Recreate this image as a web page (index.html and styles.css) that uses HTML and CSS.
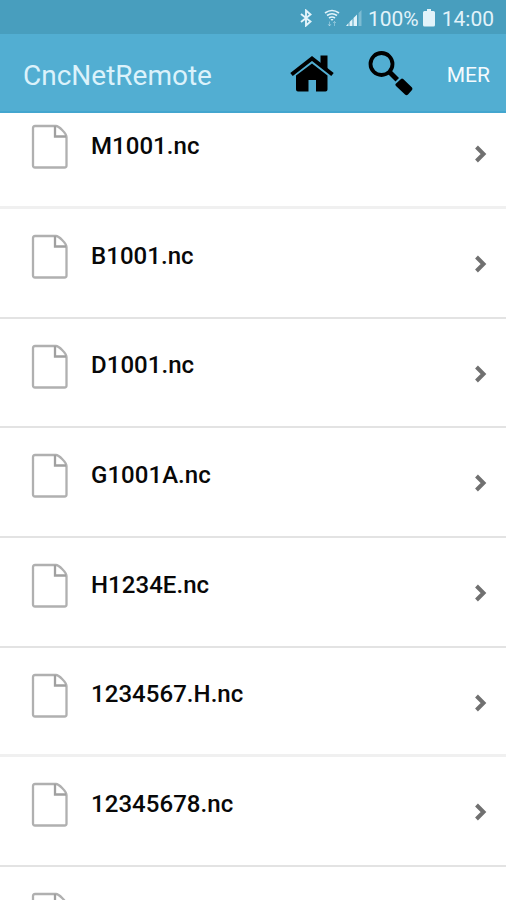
FILE: index.html
```html
<!DOCTYPE html>
<html lang="sv">
<head>
<meta charset="utf-8">
<title>CncNetRemote</title>
<link rel="stylesheet" href="styles.css">
</head>
<body>
<svg class="defs" width="0" height="0" aria-hidden="true">
  <symbol id="file" viewBox="0 0 38 46">
    <path d="M4 2H25C28 2 35.500 9.500 35.500 13V41.500Q35.500 43.500 33.500 43.500H4Q2 43.500 2 41.500V4Q2 2 4 2Z" fill="#fff" stroke="#b0b0b0" stroke-width="2.300"/>
    <path d="M24 2V12.500H35" fill="none" stroke="#a0a0a0" stroke-width="2.300"/>
  </symbol>
  <symbol id="chevron" viewBox="0 0 14 20">
    <path d="M2.500 3L9.500 10L2.500 17" fill="none" stroke="#707070" stroke-width="4"/>
  </symbol>
</svg>
<div class="screen">
  <div class="status">
    <svg class="bluetooth" viewBox="0 0 12 18"><path d="M1 5L10.500 12.500L6 16.500V1.500L10.500 5.500L1 13" fill="none" stroke="currentColor" stroke-width="1.900"/></svg>
    <svg class="wifi" viewBox="0 0 16 18"><path d="M1 4Q8 -1 15 4M3 6.500Q8 3 13 6.500M5 9Q8 7 11 9" fill="none" stroke="currentColor" stroke-width="1.700"/><path d="M6.500 10H9.500L8 12Z" fill="currentColor"/><path d="M5.500 12.500V17M10.500 12.500V17M4 15L5.500 17L7 15M9 14L10.500 12.500L12 14" fill="none" stroke="currentColor" stroke-opacity=".4"/></svg>
    <svg class="signal" viewBox="0 0 18 18"><path d="M1 17L3.500 14V17ZM4.500 17V13L7.500 10V17ZM8.500 17V9L12 5.500V17Z" fill="currentColor"/><path d="M13.500 17V4L16.500 1V17Z" fill="currentColor" opacity=".35"/></svg>
    <span class="percent">100%</span>
    <svg class="battery" viewBox="0 0 12 18"><path d="M4 0H8V2H10.500Q12 2 12 3.500V16Q12 17.500 10.500 17.500H1.500Q0 17.500 0 16V3.500Q0 2 1.500 2H4Z" fill="currentColor"/></svg>
    <span class="clock">14:00</span>
  </div>
  <header class="bar">
    <h1 class="title">CncNetRemote</h1>
    <svg class="home" viewBox="0 0 46 38"><path d="M2.500 20.500L23 4.500L43.500 20.500" fill="none" stroke="#000" stroke-width="4"/><path d="M31.500 1.500H38.500V16L31.500 10.500Z"/><path d="M23 9.500L38.500 21.500V35.500Q38.500 37.500 36.500 37.500H27V26H19.500V37.500H9Q7 37.500 7 35.500V21.500Z"/></svg>
    <svg class="search" viewBox="0 0 46 46"><circle cx="13.500" cy="13" r="11" fill="none" stroke="#000" stroke-width="3.800"/><path d="M19.500 22.500L23 19L31 27L27.500 30.500Z"/><path d="M27.500 33L33 28Q34 27 35.200 28L44 36.500Q45 38 44 39L40 43.500Q38.500 45 37 43.500L28 35Q27 34 27.500 33Z"/></svg>
    <span class="more">MER</span>
  </header>
  <main class="viewport">
    <ul class="list">
      <li class="row soft"><svg class="file"><use href="#file"/></svg><span class="name">M1001.nc</span><svg class="chevron"><use href="#chevron"/></svg></li>
      <li class="row"><svg class="file"><use href="#file"/></svg><span class="name">B1001.nc</span><svg class="chevron"><use href="#chevron"/></svg></li>
      <li class="row"><svg class="file"><use href="#file"/></svg><span class="name">D1001.nc</span><svg class="chevron"><use href="#chevron"/></svg></li>
      <li class="row"><svg class="file"><use href="#file"/></svg><span class="name">G1001A.nc</span><svg class="chevron"><use href="#chevron"/></svg></li>
      <li class="row"><svg class="file"><use href="#file"/></svg><span class="name">H1234E.nc</span><svg class="chevron"><use href="#chevron"/></svg></li>
      <li class="row soft"><svg class="file"><use href="#file"/></svg><span class="name">1234567.H.nc</span><svg class="chevron"><use href="#chevron"/></svg></li>
      <li class="row"><svg class="file"><use href="#file"/></svg><span class="name">12345678.nc</span><svg class="chevron"><use href="#chevron"/></svg></li>
      <li class="row"><svg class="file"><use href="#file"/></svg></li>
    </ul>
  </main>
</div>
</body>
</html>
```
FILE: styles.css
```css
* { box-sizing: border-box; }
body { margin: 0; font-family: Roboto, sans-serif; background: #fff; }
.defs { display: none; }
.screen { display: flex; flex-direction: column; height: 900px; overflow: hidden; }
.status {
  flex: none;
  display: flex;
  align-items: center;
  justify-content: flex-end;
  height: 34px;
  padding: 2px 12px 0 0;
  background: #489ebe;
  color: #e2f3fa;
  font-size: 21px;
  line-height: 32px;
}
.bluetooth { width: 12px; height: 18px; margin-right: 12px; }
.wifi { width: 16px; height: 18px; margin-right: 5px; }
.signal { width: 18px; height: 18px; margin-right: 5px; }
.percent { margin: 2px 4px 0 0; }
.battery { width: 12px; height: 18px; margin-right: 7px; }
.clock { margin-top: 2px; }
.bar {
  flex: none;
  display: flex;
  align-items: center;
  height: 79px;
  padding: 0 16px 0 23px;
  background: #52aed2;
  border-bottom: 2px solid #43a6cf;
}
.title {
  flex: 1;
  margin: 5px 0 0;
  color: #dbf2fb;
  font-size: 28px;
  font-weight: 400;
}
.home { width: 46px; height: 38px; margin: 1px 33px 0 0; }
.search { width: 46px; height: 46px; margin: 2px 33px 0 0; }
.more { color: #f5fbfe; font-size: 21px; margin-top: 4px; }
.viewport { flex: 1; min-height: 0; overflow: hidden; }
.list { list-style: none; margin: -13.700px 0 0; padding: 0; }
.row {
  display: flex;
  align-items: flex-start;
  height: 109.670px;
  padding: 25px 18px 0 31px;
  border-bottom: 2px solid #e3e3e3;
}
.row.soft { border-bottom: 3px solid #f0f0f0; }
.file { flex: none; width: 38px; height: 46px; }
.name {
  flex: 1;
  margin: 7.600px 0 0 22px;
  color: #080808;
  font-size: 24px;
  font-weight: 500;
  line-height: 28px;
  letter-spacing: .05px;
}
.chevron { flex: none; width: 14px; height: 20px; margin-top: 20px; }
```
